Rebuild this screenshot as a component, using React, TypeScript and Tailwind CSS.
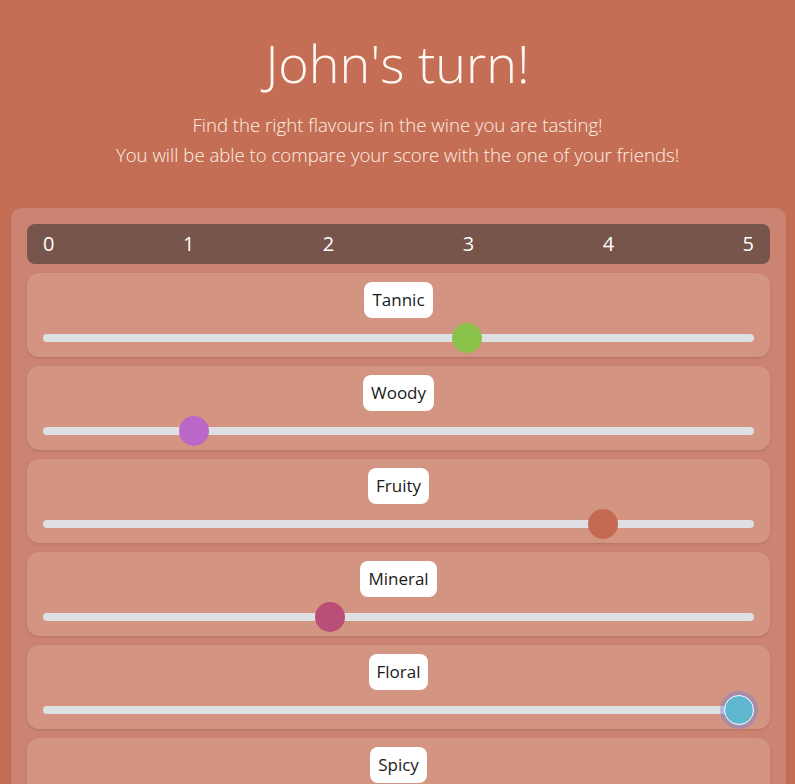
const flavours = [
  { name: "Tannic", value: 3, color: "bg-[#8bc34a]" },
  { name: "Woody", value: 1, color: "bg-[#ba68c8]" },
  { name: "Fruity", value: 4, color: "bg-[#c46a50]" },
  { name: "Mineral", value: 2, color: "bg-[#b94f76]" },
  { name: "Floral", value: 5, color: "bg-[#5eb7cf]", focused: true },
  { name: "Spicy", value: 2, color: "bg-[#e0a040]" },
];

const FlavourSlider = ({ name, value, color, focused }: { name: string; value: number; color: string; focused?: boolean }) => {
  const pct = (value / 5) * 100;

  return (
    <div className="h-[84px] shrink-0 rounded-xl bg-[#d39482] px-4 pt-[9px] shadow-sm">
      <div className="flex justify-center">
        <span className="flex h-9 items-center rounded-lg bg-white px-2 text-[17px] text-[#1a1a1a]">
          {name}
        </span>
      </div>
      <div className="relative mt-[5px] h-[30px]">
        <div className="absolute top-[11px] left-0 right-0 h-2 rounded-full bg-[#dee0e3]" />
        <div className="absolute top-0 bottom-0 left-[15px] right-[15px]">
          <div
            className={`absolute top-0 h-[30px] w-[30px] -translate-x-1/2 rounded-full ${color} ${
              focused ? "border border-white ring-4 ring-[#7b82d6]/45" : ""
            }`}
            style={{ left: `${pct}%` }}
          />
        </div>
      </div>
    </div>
  );
};

export default () => {
  return (
    <div
      className="h-[784px] overflow-hidden bg-[#c46f55]"
      style={{ fontFamily: '"Open Sans", "Noto Sans", sans-serif' }}
    >
      <div className="flex flex-col items-center pt-[28px]">
        <h1 className="text-[52px] leading-[70px] font-light text-[#fff8f2]">John's turn!</h1>
        <p className="mt-[12px] text-center text-[18.6px] leading-[30px] font-light text-[#fff0e4]">
          Find the right flavours in the wine you are tasting!
          <br />
          You will be able to compare your score with the one of your friends!
        </p>
      </div>

      <div className="mt-[38px] ml-[11px] w-[775px] rounded-t-[10px] bg-[#cc8371] p-4 pb-0 shadow">
        <div className="flex h-10 items-center justify-between rounded-lg bg-[#77554b] px-4 text-[20px] text-white">
          {[0, 1, 2, 3, 4, 5].map((n) => (
            <span key={n}>{n}</span>
          ))}
        </div>
        <div className="mt-[9px] flex flex-col gap-[9px]">
          {flavours.map((f) => (
            <FlavourSlider key={f.name} {...f} />
          ))}
        </div>
      </div>
    </div>
  );
};
